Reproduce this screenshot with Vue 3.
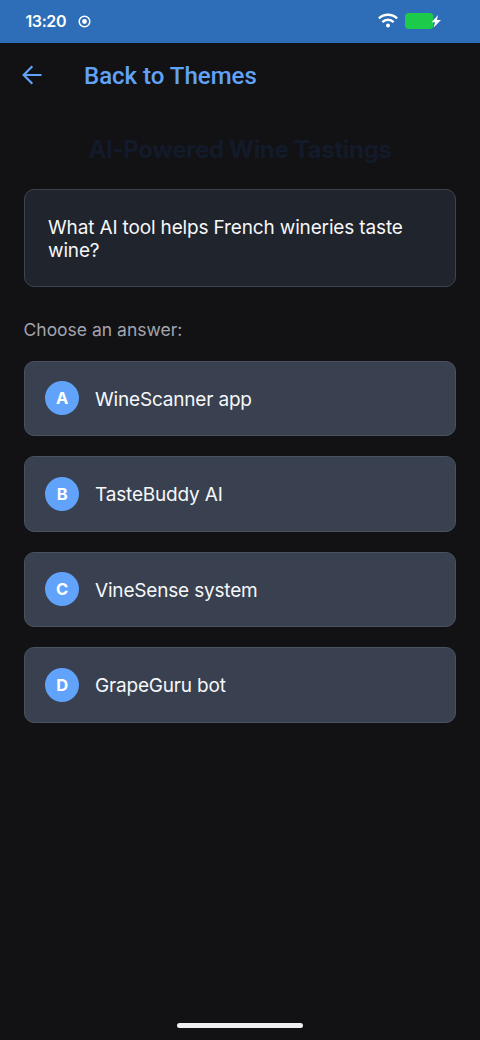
<script setup>
const options = [
  { key: 'A', label: 'WineScanner app' },
  { key: 'B', label: 'TasteBuddy AI' },
  { key: 'C', label: 'VineSense system' },
  { key: 'D', label: 'GrapeGuru bot' },
]
</script>

<template>
  <div class="screen">
    <div class="status">
      <span class="time">13:20</span>
      <svg class="record" width="13" height="13" viewBox="0 0 13 13">
        <circle cx="6.5" cy="6.5" r="5.3" fill="none" stroke="#fff" stroke-width="1.5" />
        <circle cx="6.5" cy="6.5" r="2.4" fill="#fff" />
      </svg>
      <svg class="wifi" width="20" height="16" viewBox="0 0 20 16">
        <g fill="none" stroke="#fff" stroke-width="2.4">
          <path d="M.9 5.4C6 .6 14 .6 19.100 5.4" />
          <path d="M4.4 9.1C7.5 6 12.500 6 15.600 9.100" />
        </g>
        <circle cx="10" cy="12.600" r="2" fill="#fff" />
      </svg>
      <svg class="battery" width="37" height="16" viewBox="0 0 37 16">
        <rect x="0" y="0" width="28.500" height="16" rx="4" fill="#1dcb4b" />
        <path d="M33 2L26.600 9.200H30.100L28.600 14.400L36 6.900H32Z" fill="#fff" />
      </svg>
    </div>

    <header class="bar">
      <svg width="20" height="20" viewBox="0 0 20 20" fill="none" stroke="#61a3f8" stroke-width="2.2">
        <path d="M19.500 10H2M10.300 1.300L1.700 10L10.300 18.700" />
      </svg>
      <span class="back">Back to Themes</span>
    </header>

    <main class="content">
      <h1 class="title">AI-Powered Wine Tastings</h1>
      <section class="question">What AI tool helps French wineries taste wine?</section>
      <p class="prompt">Choose an answer:</p>
      <div class="options">
        <button v-for="option in options" :key="option.key" class="option">
          <span class="badge">{{ option.key }}</span>
          <span class="label">{{ option.label }}</span>
        </button>
      </div>
    </main>

    <div class="home"></div>
  </div>
</template>

<style>
body {
  background: #121214;
}
</style>

<style scoped>
.screen {
  box-sizing: border-box;
  width: 480px;
  height: 1040px;
  display: flex;
  flex-direction: column;
  overflow: hidden;
  background: #121214;
  color: #f6f7f9;
  font-family: Inter, sans-serif;
}
.status {
  box-sizing: border-box;
  height: 42.500px;
  flex: none;
  display: flex;
  align-items: center;
  padding: 0 38px 1px 25.500px;
  background: #2e6db7;
}
.time {
  width: 52.500px;
  color: #fff;
  font-size: 16px;
  font-weight: 600;
  letter-spacing: -0.4px;
}
.record {
  margin-top: 2px;
}
.wifi {
  margin-left: auto;
}
.battery {
  margin-left: 7px;
}
.bar {
  height: 65px;
  flex: none;
  display: flex;
  align-items: center;
  padding-left: 22px;
}
.back {
  margin: 2px 0 0 42px;
  color: #61a3f8;
  font-family: Roboto, sans-serif;
  font-size: 24px;
  font-weight: 500;
  white-space: nowrap;
}
.content {
  padding: 26px 24px 0;
}
.title {
  margin: 0;
  height: 55.500px;
  color: #131a2a;
  font-size: 24px;
  line-height: 31px;
  font-weight: 700;
  letter-spacing: -0.33px;
  text-align: center;
}
.question {
  box-sizing: border-box;
  height: 98px;
  padding: 27px 23px;
  border: 1.500px solid #3c444f;
  border-radius: 10px;
  background: #20242d;
  font-size: 19px;
  line-height: 22.500px;
  letter-spacing: -0.15px;
}
.prompt {
  margin: 30.500px 0 19px;
  color: #a4a4ae;
  font-size: 17.500px;
  line-height: 24px;
  text-indent: -0.5px;
}
.options {
  display: flex;
  flex-direction: column;
  gap: 19.900px;
}
.option {
  box-sizing: border-box;
  height: 75.700px;
  display: flex;
  align-items: center;
  gap: 16px;
  padding: 0 20px 0.5px;
  border: 1px solid #485260;
  border-radius: 10px;
  background: #394150;
  color: #f6f7f9;
  font: 19px Inter, sans-serif;
  letter-spacing: -0.18px;
}
.badge {
  width: 34px;
  height: 34px;
  display: flex;
  align-items: center;
  justify-content: center;
  border-radius: 50%;
  background: #61a3fa;
  color: #fff;
  font-size: 16.500px;
  font-weight: 700;
}
.label {
  padding-top: 2px;
}
.home {
  width: 126px;
  height: 5px;
  margin: auto auto 12px;
  border-radius: 3px;
  background: #f0f0f2;
}
</style>
